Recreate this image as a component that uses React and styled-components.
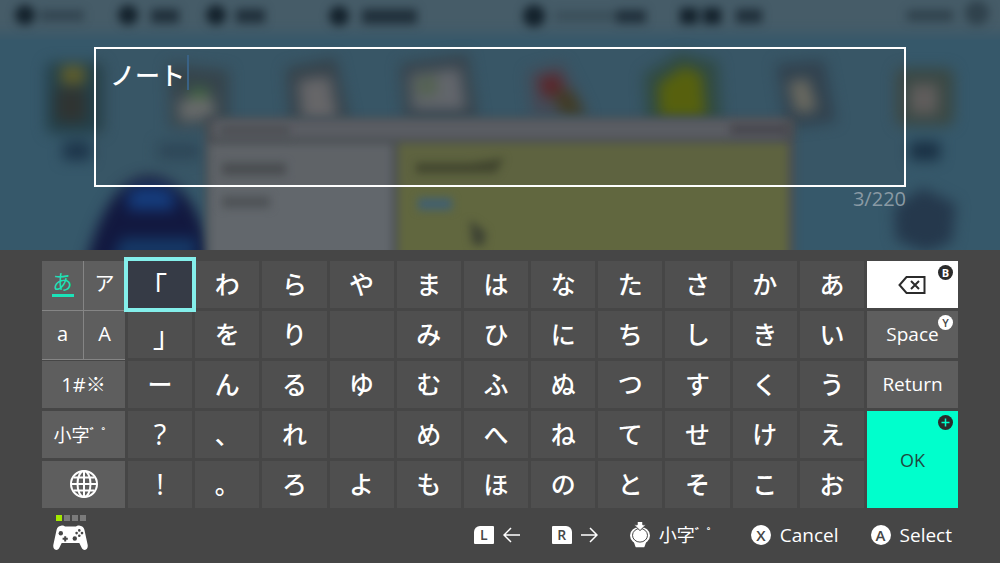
import React, { useState } from "react"
import styled, { createGlobalStyle, css } from "styled-components"

const GlobalStyle = createGlobalStyle`
  * {
    box-sizing: border-box;
  }

  body {
    margin: 0;
    background: #464646;
    color: #fff;
    font-family: "Open Sans", "Noto Sans CJK JP", sans-serif;
  }

  button,
  textarea {
    font-family: inherit;
    color: inherit;
  }
`

const Screen = styled.main`
  min-height: 100vh;
  display: flex;
  flex-direction: column;
  overflow: hidden;
`

const Stage = styled.section`
  position: relative;
  overflow: hidden;
  height: 250px;
  padding: 47px 94px 0;
  background: #36586a;
`

const Backdrop = styled.svg`
  position: absolute;
  inset: 0;
  width: 100%;
  height: 100%;
`

const Field = styled.div`
  position: relative;
`

const TextBox = styled.textarea`
  display: block;
  width: 100%;
  height: 140px;
  padding: 7px 14px;
  border: 2px solid #fff;
  border-radius: 0;
  outline: none;
  resize: none;
  background: rgba(70, 70, 70, 0.12);
  font-family: "Noto Sans CJK JP", sans-serif;
  font-size: 25px;
  font-weight: 500;
  line-height: 36px;
`

const Caret = styled.span`
  position: absolute;
  top: 8px;
  left: 93px;
  width: 2px;
  height: 35px;
  background: #3a6285;
`

const Counter = styled.p`
  position: relative;
  margin: 0;
  text-align: right;
  font-size: 20px;
  line-height: 24px;
  color: #8a9aa4;
`

const Panel = styled.section`
  flex: 1;
  padding: 11px 42px 0;
  background: #464646;
`

const Board = styled.div`
  display: grid;
  grid-template-columns: 83px minmax(0, 1fr) 91px;
  gap: 3px;
`

const Side = styled.div`
  display: grid;
  grid-template-rows: repeat(5, 47px);
  gap: 3px;
`

const KanaGrid = styled.div`
  display: grid;
  grid-template-columns: repeat(11, minmax(0, 1fr));
  grid-template-rows: repeat(5, 47px);
  gap: 3px;
`

const BaseKey = styled.button`
  position: relative;
  display: flex;
  align-items: center;
  justify-content: center;
  min-width: 0;
  padding: 0 0 2px;
  border: 0;
  border-radius: 0;
  white-space: nowrap;
`

const KanaKey = styled(BaseKey)`
  padding-bottom: 4px;
  background: #4f4f4f;
  font-family: "Noto Sans CJK JP", sans-serif;
  font-size: 25px;
  font-weight: 500;
  line-height: 36px;
  ${props =>
    props.$kind === "bracket" &&
    css`
      padding-bottom: 0;
      font-size: 29px;
      font-weight: 400;
      font-feature-settings: "halt";
    `}
  ${props =>
    props.$kind === "latin" &&
    css`
      padding-bottom: 2px;
      font-family: "Open Sans", sans-serif;
      font-size: 29px;
      font-weight: 400;
    `}
  ${props =>
    props.$selected &&
    css`
      z-index: 1;
      background: #363b46;
      outline: 4px solid #84efeb;
    `}
`

const FnKey = styled(BaseKey)`
  background: #5e5e5e;
  font-size: ${props => (props.$small ? "18px" : "20px")};
`

const ModeGroup = styled.div`
  grid-row: span 2;
  display: grid;
  grid-template-columns: 1fr 1fr;
  grid-template-rows: 1fr 1fr;
  gap: 1px;
  margin-bottom: -2px;
  border-bottom: 1px solid #858585;
  background: #858585;
`

const ModeLabel = styled.span`
  line-height: 24px;
  ${props =>
    props.$active &&
    css`
      border-bottom: 3px solid #1be3b8;
      padding: 0 1px;
      line-height: 22px;
      color: #1be3b8;
    `}
`

const Marks = styled.span`
  font-family: "Noto Sans CJK JP", sans-serif;
  font-size: 12px;
  font-weight: 700;
  vertical-align: 4px;
  line-height: 1;
`

const ActionKey = styled(BaseKey)`
  background: #5e5e5e;
  font-size: 19px;
  ${props =>
    props.$tone === "light" &&
    css`
      padding: 0 1px 0 0;
      background: #fff;
      color: #2b2b2b;
    `}
  ${props =>
    props.$tone === "ok" &&
    css`
      grid-row: span 2;
      padding: 0;
      background: #00ffcc;
      color: #1f4a41;
      font-size: 18px;
    `}
`

const Badge = styled.span`
  position: absolute;
  top: 4px;
  right: 5px;
  width: 15px;
  height: 15px;
  border-radius: 50%;
  background: ${props => (props.$light ? "#fff" : "#2b2b2b")};
  color: ${props => (props.$light ? "#4a4a4a" : "#fff")};
  font-size: 11px;
  font-weight: ${props => (props.$light ? 600 : 700)};
  line-height: 15px;
  text-align: center;

  svg {
    display: block;
  }
`

const Footer = styled.footer`
  display: flex;
  align-items: center;
  justify-content: space-between;
  height: 55px;
  padding: 0 6px 2px 11px;
`

const Player = styled.div`
  display: grid;
  gap: 4px;
  padding-bottom: 4px;
`

const Lights = styled.div`
  display: flex;
  gap: 2px;
  padding-left: 3px;
`

const Light = styled.span`
  width: 6px;
  height: 6px;
  background: ${props => (props.$on ? "#a4ea00" : "#7b7b7b")};
`

const Hints = styled.div`
  display: flex;
  gap: 32px;
`

const Hint = styled.div`
  display: flex;
  align-items: center;
  gap: 9px;
  font-size: ${props => (props.$small ? "18px" : "19px")};
  line-height: 26px;
  white-space: nowrap;
`

const Shoulder = styled.span`
  width: 20px;
  height: 18px;
  border-radius: ${props => (props.$right ? "1px 6px 1px 1px" : "6px 1px 1px 1px")};
  background: #fff;
  color: #464646;
  font-size: 14px;
  font-weight: 600;
  line-height: 18px;
  text-align: center;
`

const RoundButton = styled.span`
  width: 20px;
  height: 20px;
  border-radius: 50%;
  background: #fff;
  color: #464646;
  font-size: 15px;
  font-weight: 600;
  line-height: 20px;
  text-align: center;
`

const rows = [
  ["「", "わ", "ら", "や", "ま", "は", "な", "た", "さ", "か", "あ"],
  ["」", "を", "り", "", "み", "ひ", "に", "ち", "し", "き", "い"],
  ["ー", "ん", "る", "ゆ", "む", "ふ", "ぬ", "つ", "す", "く", "う"],
  ["?", "、", "れ", "", "め", "へ", "ね", "て", "せ", "け", "え"],
  ["!", "。", "ろ", "よ", "も", "ほ", "の", "と", "そ", "こ", "お"],
]

const kinds = { "「": "bracket", "」": "bracket", "?": "latin", "!": "latin" }

const DesktopScene = () => (
  <Backdrop viewBox="0 0 1000 250" preserveAspectRatio="xMidYMid slice" aria-hidden="true">
    <defs>
      <filter id="soft" x="-10%" y="-10%" width="120%" height="120%" colorInterpolationFilters="sRGB">
        <feGaussianBlur stdDeviation="7" />
      </filter>
      <filter id="menu" x="-10%" y="-50%" width="120%" height="200%" colorInterpolationFilters="sRGB">
        <feGaussianBlur stdDeviation="5" />
      </filter>
      <filter id="edge" x="-10%" y="-10%" width="120%" height="120%" colorInterpolationFilters="sRGB">
        <feGaussianBlur stdDeviation="4" />
      </filter>
    </defs>
    <rect x="-20" y="-20" width="1040" height="54" fill="#465c68" filter="url(#soft)" />
    {/* menu bar */}
    <g filter="url(#menu)" fill="#14222c">
      <circle cx="25" cy="15" r="10" />
      <circle cx="128" cy="15" r="10" />
      <circle cx="216" cy="15" r="10" />
      <circle cx="339" cy="16" r="10" />
      <circle cx="534" cy="16" r="11" />
      <rect x="680" y="8" width="18" height="16" />
      <rect x="703" y="8" width="18" height="16" />
      <g opacity="0.75">
        <rect x="40" y="10" width="44" height="11" opacity="0.5" />
        <rect x="151" y="9" width="28" height="14" />
        <rect x="236" y="9" width="29" height="14" />
        <rect x="362" y="9" width="55" height="15" />
        <rect x="555" y="11" width="60" height="10" opacity="0.3" />
        <rect x="616" y="10" width="30" height="13" />
        <rect x="736" y="9" width="26" height="14" />
        <rect x="907" y="10" width="46" height="11" opacity="0.6" />
        <circle cx="977" cy="13" r="12" opacity="0.6" />
      </g>
    </g>
    {/* desktop icons */}
    <g filter="url(#soft)">
      <rect x="46" y="62" width="58" height="72" rx="8" fill="#24404a" />
      <rect x="61" y="66" width="24" height="18" fill="#625f2a" />
      <rect x="56" y="88" width="30" height="34" fill="#2f3432" />
      <rect x="63" y="142" width="28" height="18" fill="#1c3348" />
      <path d="M168 64 L229 70 V126 L170 128 Z" fill="#34444d" />
      <path d="M178 100 L212 96 L216 118 L180 122 Z" fill="#6c6f6f" />
      <rect x="190" y="88" width="18" height="10" fill="#3e6b3c" />
      <rect x="158" y="143" width="42" height="16" fill="#2a4659" />
      <path d="M286 68 L336 58 L350 122 H290 Z" fill="#33414b" />
      <path d="M298 80 L330 76 L338 120 H302 Z" fill="#6a6a6d" />
      <path d="M400 64 L468 54 L478 120 H404 Z" fill="#34424c" />
      <path d="M410 74 L460 68 L466 110 L412 110 Z" fill="#666a71" />
      <path d="M417 78 L436 76 L438 94 L418 97 Z" fill="#546650" />
      <path d="M528 72 L562 62 L588 116 H532 Z" fill="#444a58" />
      <path d="M538 78 L560 74 L564 94 L544 98 Z" fill="#5f2026" />
      <path d="M552 92 L572 90 L586 116 H562 Z" fill="#403a20" />
      <path d="M644 74 L680 52 L718 62 L722 122 H646 Z" fill="#2c4a44" />
      <path d="M658 84 L684 66 L702 74 L706 118 H660 Z" fill="#596406" />
      <path d="M776 64 L824 60 L836 122 L786 128 Z" fill="#2e4150" />
      <path d="M788 82 L808 78 L818 110 L796 114 Z" fill="#6d6d63" />
      <rect x="896" y="68" width="58" height="58" rx="8" fill="#3a4844" />
      <rect x="910" y="84" width="28" height="30" fill="#605d5c" />
      <rect x="910" y="142" width="30" height="18" fill="#182e42" />
      <path d="M922 188 L956 204 L952 242 L926 252 L896 240 L894 208 Z" fill="#25384c" />
      <path d="M84 270 C98 215 118 176 150 176 C182 178 206 214 212 270 Z" fill="#12183f" />
      <path d="M128 192 C138 184 166 184 174 194 V210 H128 Z" fill="#153c7c" />
      <path d="M122 238 H196 V260 H112 Z" fill="#153866" />
    </g>
    {/* open window */}
    <g filter="url(#edge)">
      <rect x="205" y="117" width="590" height="150" fill="#4b5055" />
      <rect x="214" y="120" width="570" height="18" fill="#5d6067" />
      <rect x="209" y="144" width="183" height="120" fill="#62676c" />
      <rect x="398" y="143" width="390" height="120" fill="#61673f" />
    </g>
    <g filter="url(#edge)">
      <rect x="220" y="125" width="70" height="12" fill="#505359" />
      <rect x="730" y="123" width="60" height="13" fill="#4a4a52" />
      <rect x="222" y="163" width="64" height="12" fill="#4a4e52" />
      <rect x="222" y="196" width="48" height="12" fill="#4f5357" />
      <path d="M416 163 H470 L504 158 L496 173 H416 Z" fill="#41462b" />
      <rect x="418" y="198" width="34" height="12" fill="#42606f" />
      <path d="M470 220 L486 232 L484 246 L472 244 Z" fill="#3f4434" />
    </g>
  </Backdrop>
)

const GlobeIcon = () => (
  <svg width="30" height="30" viewBox="0 0 30 30" fill="none" stroke="#fff" strokeWidth="2" aria-hidden="true">
    <circle cx="15" cy="15" r="13" />
    <ellipse cx="15" cy="15" rx="6.5" ry="13" />
    <path d="M15 2v26M2 15h26M4.5 8.5h21M4.5 21.5h21" />
  </svg>
)

const BackspaceIcon = () => (
  <svg width="28" height="20" viewBox="0 0 28 20" fill="none" stroke="#2b2b2b" strokeWidth="2" aria-hidden="true">
    <path d="M8.5 2H26.5V18H8.5L1.5 10Z" />
    <path d="M13 6l8 8M21 6l-8 8" />
  </svg>
)

const PadIcon = () => (
  <svg width="35" height="26" viewBox="0 0 35 26" aria-hidden="true">
    <path
      fill="#fff"
      d="M8 .8C9.6 .3 11 .5 12 1.5H23C24 .5 25.4 .3 27 .8C29.5 1.2 30.8 2.5 31.4 4.8L34.6 19.5C35.2 22.8 34 25 31.8 25C30.2 25 29.2 24 28.4 22.3L26.3 18H8.7L6.6 22.3C5.8 24 4.8 25 3.2 25C1 25-.2 22.8.4 19.5L3.6 4.8C4.2 2.5 5.5 1.2 8 .8Z"
    />
    <g fill="#464646">
      <circle cx="7.8" cy="8.2" r="2.2" />
      <circle cx="21.8" cy="13.5" r="2.2" />
      <path d="M11.2 11.2h2v1.6h1.6v2h-1.6v1.6h-2v-1.6H9.6v-2h1.6z" />
      <circle cx="26.3" cy="5.4" r="1.3" />
      <circle cx="26.3" cy="10.8" r="1.3" />
      <circle cx="23.6" cy="8.1" r="1.3" />
      <circle cx="29" cy="8.1" r="1.3" />
    </g>
  </svg>
)

const ArrowIcon = ({ right }) => (
  <svg width="17" height="16" viewBox="0 0 17 16" fill="none" stroke="#fff" strokeWidth="1.5" aria-hidden="true">
    <path d={right ? "M0 8h16M9 1l7 7-7 7" : "M17 8H1M8 1L1 8l7 7"} />
  </svg>
)

const StickIcon = () => (
  <svg width="20" height="26" viewBox="0 0 20 26" aria-hidden="true">
    <path fill="#fff" d="M3.5 19H16.5L14.6 24.4Q14.3 25.300 13.400 25.300H6.600Q5.700 25.300 5.400 24.400Z" />
    <ellipse cx="10" cy="13.5" rx="10" ry="8.800" fill="#fff" />
    <ellipse cx="10" cy="13.3" rx="7.500" ry="6.800" fill="#fff" stroke="#464646" strokeWidth="1" />
    <path d="M7.2 -1h5.600v3.800h3.200L10 8.600 4 2.800h3.200z" fill="#fff" stroke="#464646" strokeWidth="1" />
  </svg>
)

const App = () => {
  const [text, setText] = useState("ノート")

  return (
    <Screen>
      <GlobalStyle />
      <Stage>
        <DesktopScene />
        <Field>
          <TextBox
            aria-label="Text"
            maxLength={220}
            value={text}
            onChange={e => setText(e.target.value)}
          />
          <Caret />
        </Field>
        <Counter>{text.length}/220</Counter>
      </Stage>

      <Panel>
        <Board>
          <Side>
            <ModeGroup>
              <FnKey>
                <ModeLabel $active>あ</ModeLabel>
              </FnKey>
              <FnKey>
                <ModeLabel>ア</ModeLabel>
              </FnKey>
              <FnKey>
                <ModeLabel>a</ModeLabel>
              </FnKey>
              <FnKey>
                <ModeLabel>A</ModeLabel>
              </FnKey>
            </ModeGroup>
            <FnKey>1#※</FnKey>
            <FnKey $small>
              <span>
                小字<Marks>゛゜</Marks>
              </span>
            </FnKey>
            <FnKey aria-label="Language">
              <GlobeIcon />
            </FnKey>
          </Side>

          <KanaGrid>
            {rows.map((row, y) =>
              row.map((kana, x) => (
                <KanaKey
                  key={`${y}-${x}`}
                  $kind={kinds[kana]}
                  $selected={x === 0 && y === 0}
                  disabled={!kana}
                  onClick={() => setText(text + kana)}
                >
                  {kana}
                </KanaKey>
              ))
            )}
          </KanaGrid>

          <Side>
            <ActionKey
              $tone="light"
              aria-label="Backspace"
              onClick={() => setText(text.slice(0, -1))}
            >
              <BackspaceIcon />
              <Badge>B</Badge>
            </ActionKey>
            <ActionKey onClick={() => setText(text + " ")}>
              Space
              <Badge $light>Y</Badge>
            </ActionKey>
            <ActionKey onClick={() => setText(text + "\n")}>Return</ActionKey>
            <ActionKey $tone="ok">
              OK
              <Badge>
                <svg width="15" height="15" viewBox="0 0 15 15" stroke="#00ffcc" strokeWidth="1.5">
                  <path d="M7.5 3.5v8M3.5 7.5h8" />
                </svg>
              </Badge>
            </ActionKey>
          </Side>
        </Board>

        <Footer>
          <Player>
            <Lights>
              <Light $on />
              <Light />
              <Light />
              <Light />
            </Lights>
            <PadIcon />
          </Player>
          <Hints>
            <Hint>
              <Shoulder>L</Shoulder>
              <ArrowIcon />
            </Hint>
            <Hint>
              <Shoulder $right>R</Shoulder>
              <ArrowIcon right />
            </Hint>
            <Hint $small>
              <StickIcon />
              <span>
                小字<Marks>゛゜</Marks>
              </span>
            </Hint>
            <Hint>
              <RoundButton>X</RoundButton>
              Cancel
            </Hint>
            <Hint>
              <RoundButton>A</RoundButton>
              Select
            </Hint>
          </Hints>
        </Footer>
      </Panel>
    </Screen>
  )
}

export default App
